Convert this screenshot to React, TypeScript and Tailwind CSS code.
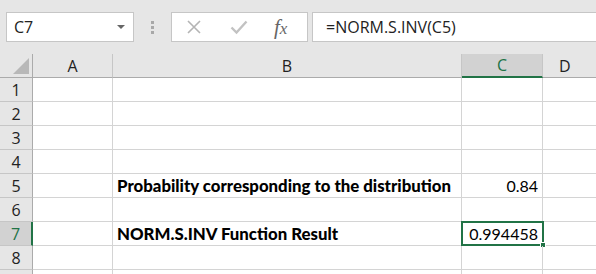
const rows = [1, 2, 3, 4, 5, 6, 7, 8, 9];

const cellFont = { fontFamily: "Lato, 'Liberation Sans', sans-serif" };

export default function App() {
  return (
    <div className="w-[596px] h-[274px] overflow-hidden bg-white font-['Open_Sans',sans-serif]">
      {/* Formula bar */}
      <div className="h-[54px] bg-[#e6e6e6] flex items-start pt-[12px] pl-[6px]">
        <div className="w-[128px] h-[30px] bg-white border border-[#c6c6c6] flex items-center justify-between pl-[7px] pr-[8px]">
          <span className="text-[16px] text-[#222]">C7</span>
          <svg width="8" height="5" viewBox="0 0 8 5">
            <path d="M0 0 H8 L4 4 Z" fill="#666" />
          </svg>
        </div>
        <div className="w-[37px] h-[30px] flex flex-col items-center justify-center gap-[2px]">
          <div className="w-[3px] h-[3px] bg-[#a8a8a8]" />
          <div className="w-[3px] h-[3px] bg-[#a8a8a8]" />
          <div className="w-[3px] h-[3px] bg-[#a8a8a8]" />
        </div>
        <div className="w-[137px] h-[30px] bg-white border border-[#c6c6c6] flex items-center">
          <svg className="ml-[14px]" width="16" height="16" viewBox="0 0 16 16">
            <path d="M2 2 L14 14 M14 2 L2 14" stroke="#b4b4b4" strokeWidth="1.6" />
          </svg>
          <svg className="ml-[28px]" width="18" height="16" viewBox="0 0 18 16">
            <path d="M1.5 8.5 L6.5 13.5 L16.5 2.5" stroke="#c2c2c2" strokeWidth="2.4" fill="none" />
          </svg>
          <span className="ml-[26px] text-[21px] italic text-[#666] font-['Liberation_Serif',serif] leading-none">
            f<span className="text-[17px]">x</span>
          </span>
        </div>
        <div className="ml-[4px] flex-1 h-[30px] bg-white border border-[#c6c6c6] border-r-0 flex items-center pl-[13px]">
          <span className="text-[16px] text-[#222]">=NORM.S.INV(C5)</span>
        </div>
      </div>

      {/* Grid */}
      <div className="grid grid-cols-[33px_80px_349px_81px_1fr]">
        {/* Header row */}
        <div className="h-[24px] bg-[#e6e6e6] border-r border-b border-[#ababab] relative">
          <svg className="absolute right-[3px] bottom-[3px]" width="16" height="16" viewBox="0 0 16 16">
            <path d="M16 0 V16 H0 Z" fill="#b8b8b8" />
          </svg>
        </div>
        <div className="h-[24px] bg-[#e6e6e6] border-r border-b border-r-[#c6c6c6] border-b-[#ababab] flex items-center justify-center text-[16px] text-[#222]">A</div>
        <div className="h-[24px] bg-[#e6e6e6] border-r border-b border-r-[#c6c6c6] border-b-[#ababab] flex items-center justify-center text-[16px] text-[#222]">B</div>
        <div className="h-[24px] bg-[#d2d2d2] border-r border-r-[#c6c6c6] border-b-2 border-b-[#217346] flex items-center justify-center text-[16px] text-[#217346]">C</div>
        <div className="h-[24px] bg-[#e6e6e6] border-b border-b-[#ababab] flex items-center pl-[16px] text-[16px] text-[#222]">D</div>

        {rows.map((r) => {
          const sel = r === 7;
          return [
            <div
              key={`h${r}`}
              className={
                sel
                  ? "h-[24px] bg-[#d2d2d2] border-r-2 border-r-[#217346] border-b border-b-[#c6c6c6] flex items-center justify-center text-[16px] text-[#217346]"
                  : "h-[24px] bg-[#e6e6e6] border-r border-r-[#ababab] border-b border-b-[#c6c6c6] flex items-center justify-center text-[16px] text-[#222]"
              }
            >
              {r < 9 ? r : ""}
            </div>,
            <div key={`a${r}`} className="h-[24px] border-r border-b border-[#d4d4d4]" />,
            <div
              key={`b${r}`}
              className="h-[24px] border-r border-b border-[#d4d4d4] flex items-center pl-[4px] text-[16.8px] font-black text-black whitespace-nowrap"
              style={cellFont}
            >
              {r === 5 ? "Probability corresponding to the distribution" : r === 7 ? "NORM.S.INV Function Result" : ""}
            </div>,
            <div
              key={`c${r}`}
              className="h-[24px] border-r border-b border-[#d4d4d4] flex items-center justify-end pr-[4px] text-[16px] text-black relative"
              style={cellFont}
            >
              {r === 5 ? "0.84" : r === 7 ? "0.994458" : ""}
              {sel && (
                <div className="absolute left-[-1px] top-[-1px] right-[-2px] bottom-[-1px] border-2 border-[#217346]">
                  <div className="absolute right-[-4px] bottom-[-4px] w-[6px] h-[6px] bg-[#217346] border border-white" />
                </div>
              )}
            </div>,
            <div key={`d${r}`} className="h-[24px] border-b border-[#d4d4d4]" />,
          ];
        })}
      </div>
    </div>
  );
}
